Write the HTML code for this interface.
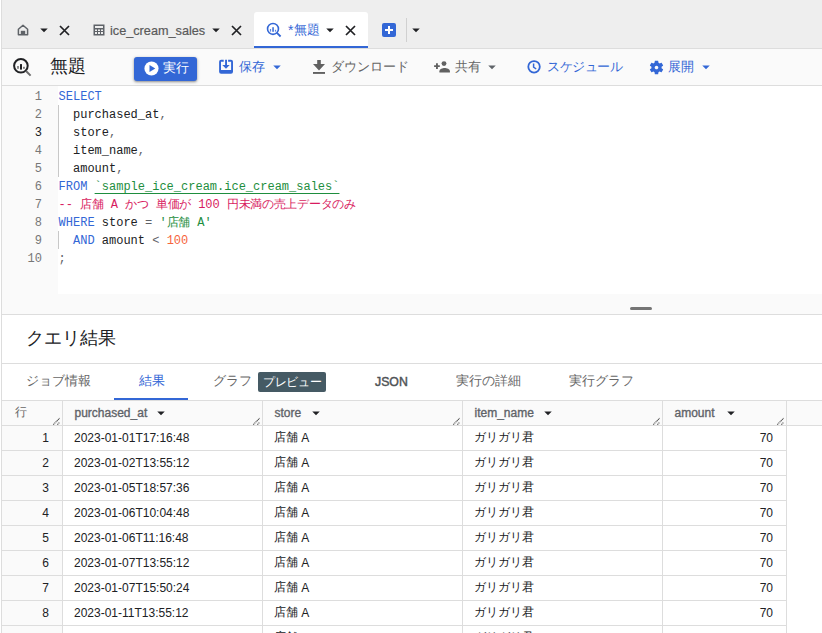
<!DOCTYPE html>
<html lang="ja"><head><meta charset="utf-8">
<style>
*{margin:0;padding:0;box-sizing:border-box}
html,body{width:822px;height:633px;overflow:hidden;background:#fff;font-family:"Liberation Sans",sans-serif;color:#202124}
.a{position:absolute}
svg{display:block}
#tabbar{left:0;top:0;width:822px;height:48px;background:#eeeeee}
#lb{left:1px;top:0;width:1px;height:633px;background:#dddddd;z-index:5}
#toolbar{left:0;top:48px;width:822px;height:38px;background:#fafafa;border-top:1px solid #dddddd;border-bottom:1px solid #dddddd}
.t13{font-size:13px;white-space:nowrap;line-height:16px}
.gray{color:#666}
.blue{color:#3367d6}
#gutter{left:2px;top:86px;width:56px;height:228px;background:#fafafa}
#code{left:58px;top:86px;width:764px;height:208px;background:#fff}
#codebot{left:58px;top:294px;width:764px;height:20px;background:#fafafa}
.ln{position:absolute;left:2px;width:40px;text-align:right;font-family:"Liberation Mono",monospace;font-size:12px;line-height:18px;color:#777}
.cl{position:absolute;left:58.6px;font-family:"Liberation Mono",monospace;font-size:12px;line-height:18px;white-space:pre;color:#202124}
.kw{color:#3367d6}
.str{color:#1e8e3e}
.cm{color:#d81b60}
.num{color:#f6643c}
.op{color:#5f6368}
.up{position:relative;top:-1px}
.cj{letter-spacing:-0.3px}
.guide{position:absolute;left:58px;width:1px;background:#c8c8c8}
.hr{position:absolute;left:2px;width:820px;height:1px;background:#dddddd}
.rowln{position:absolute;left:2px;width:784px;height:1px;background:#dddddd}
.vl{position:absolute;width:1px;background:#dddddd}
.cell{position:absolute;font-size:12px;line-height:16px;white-space:nowrap;color:#202124}
.hd{position:absolute;margin-left:0.5px;font-size:12px;font-weight:400;line-height:16px;white-space:nowrap;color:#5f6368;-webkit-text-stroke:0.35px #5f6368}
</style></head><body>
<div id="tabbar" class="a"></div>
<div id="lb" class="a"></div>
<div class="a" style="left:0;top:0;width:1px;height:633px;background:#fff;z-index:5"></div>

<!-- tab 1: home -->
<svg class="a" style="left:17px;top:24px" width="12" height="12" viewBox="0 0 12 12"><path d="M6 1.3L10.6 5.2V10.8H1.4V5.2Z" fill="none" stroke="#5f6368" stroke-width="1.5" stroke-linejoin="round"/><rect x="3.8" y="6.8" width="4.4" height="4.2" fill="#5f6368"/></svg>
<svg class="a" style="left:35px;top:21px" width="18" height="18" viewBox="0 0 24 24"><path fill="#202124" d="M7 10l5 5 5-5z"/></svg>
<svg class="a" style="left:58.54px;top:24.54px" width="11" height="11" viewBox="0 0 11 11"><path d="M1 1L10 10M10 1L1 10" stroke="#202124" stroke-width="1.7"/></svg>

<!-- tab 2: table -->
<svg class="a" style="left:93px;top:24px" width="12" height="12" viewBox="0 0 12 12"><path fill="#5f6368" d="M0.5 0.5h11v11h-11z M2 2v2h8V2z M2 5.5v1.5h2V5.5z M5 5.5v1.5h2V5.5z M8 5.5v1.5h2V5.5z M2 8v2h2V8z M5 8v2h2V8z M8 8v2h2V8z" fill-rule="evenodd"/></svg>
<div class="a t13 gray" style="left:110px;top:23px;font-size:12.7px;color:#5a5a5a;-webkit-text-stroke:0.2px #5a5a5a">ice_cream_sales</div>
<svg class="a" style="left:207px;top:21px" width="18" height="18" viewBox="0 0 24 24"><path fill="#202124" d="M7 10l5 5 5-5z"/></svg>
<svg class="a" style="left:230.54px;top:24.54px" width="11" height="11" viewBox="0 0 11 11"><path d="M1 1L10 10M10 1L1 10" stroke="#202124" stroke-width="1.7"/></svg>

<!-- active tab -->
<div class="a" style="left:254px;top:12px;width:114px;height:36px;background:#fff;border-radius:3px 3px 0 0;border-bottom:2px solid #3367d6"></div>
<svg class="a" style="left:265px;top:21px" width="17" height="17" viewBox="0 0 17 17"><circle cx="8" cy="7.9" r="5.45" fill="none" stroke="#3367d6" stroke-width="1.6"/><path d="M11.9 11.8L15.6 15.5" stroke="#3367d6" stroke-width="1.8"/><rect x="7.3" y="6.2" width="1.5" height="4.6" fill="#3367d6"/><rect x="4.9" y="8" width="1.2" height="2.6" fill="#3367d6" opacity=".8"/><rect x="9.9" y="8.8" width="1.2" height="1.8" fill="#3367d6" opacity=".8"/></svg>
<div class="a t13 blue" style="left:288px;top:22px"><span style="position:relative;top:0px;font-size:14px">*</span><span style="font-size:12.5px;position:relative;top:-1.5px;left:0.5px">無題</span></div>
<svg class="a" style="left:321px;top:21px" width="18" height="18" viewBox="0 0 24 24"><path fill="#202124" d="M7 10l5 5 5-5z"/></svg>
<svg class="a" style="left:344.54px;top:24.54px" width="11" height="11" viewBox="0 0 11 11"><path d="M1 1L10 10M10 1L1 10" stroke="#202124" stroke-width="1.7"/></svg>

<!-- plus -->
<div class="a" style="left:382px;top:23px;width:14px;height:14px;background:#3367d6;border-radius:2px"></div>
<div class="a" style="left:385px;top:29px;width:8px;height:2px;background:#fff"></div>
<div class="a" style="left:388px;top:26px;width:2px;height:8px;background:#fff"></div>
<div class="a" style="left:406px;top:18px;width:1px;height:24px;background:#d0d0d0"></div>
<svg class="a" style="left:407px;top:21px" width="18" height="18" viewBox="0 0 24 24"><path fill="#202124" d="M7 10l5 5 5-5z"/></svg>

<!-- toolbar -->
<div id="toolbar" class="a"></div>
<svg class="a" style="left:11px;top:56px" width="22" height="22" viewBox="0 0 22 22"><circle cx="9.9" cy="9.8" r="6.8" fill="none" stroke="#202124" stroke-width="2"/><path d="M15 15L19.6 19.6" stroke="#6b6b6b" stroke-width="2"/><rect x="9" y="8.1" width="2" height="5.5" fill="#202124"/><rect x="6.3" y="10" width="1.4" height="2.8" fill="#606060"/><rect x="12.2" y="10.8" width="1.5" height="2" fill="#606060"/></svg>
<div class="a" style="left:50px;top:55px;font-size:18px;line-height:22px;color:#202124">無題</div>

<div class="a" style="left:134px;top:57px;width:63px;height:23.5px;background:#3367d6;border-radius:3px;box-shadow:0 1px 2px rgba(0,0,0,.3),0 1px 3px 1px rgba(0,0,0,.12)"></div>
<svg class="a" style="left:143.5px;top:60.5px" width="15" height="15" viewBox="0 0 24 24"><circle cx="12" cy="12" r="11.3" fill="#fff"/><path d="M8.8 6.4V17.4L18 11.9z" fill="#3367d6"/></svg>
<div class="a t13" style="left:163px;top:60px;color:#fff">実行</div>

<svg class="a" style="left:218px;top:59px" width="16" height="16" viewBox="0 0 16 16"><path fill="#3367d6" d="M3.1 0.85H5.7V2.75H3V11H13.1V2.75H10.1V0.85H13A2 2 0 0 1 15 2.85V12.8A2 2 0 0 1 13 14.8H3.1A2 2 0 0 1 1.1 12.8V2.85A2 2 0 0 1 3.1 0.85Z"/><path fill="#3367d6" d="M7.1 0.85H9V6H11.7L8 9.7L4.3 6H7.1Z"/></svg>
<div class="a t13 blue" style="left:239px;top:59px">保存</div>
<svg class="a" style="left:268px;top:58px" width="18" height="18" viewBox="0 0 24 24"><path fill="#3367d6" d="M7 10l5 5 5-5z"/></svg>

<svg class="a" style="left:312px;top:60px" width="14" height="14" viewBox="0 0 14 14"><path fill="#616161" d="M5.2 0.1H8.8V4.1H13L7 10.5L1 4.1H5.2Z"/><rect x="1" y="12" width="12" height="1.9" fill="#616161"/></svg>
<div class="a t13 gray" style="left:331px;top:59px">ダウンロード</div>

<svg class="a" style="left:433px;top:60px" width="18" height="14" viewBox="0 0 18 14"><path fill="#616161" d="M1.1 5.2H3V3.3H4.9V5.2H6.8V7.1H4.9V9H3V7.1H1.1Z"/><circle cx="11" cy="3.6" r="2.45" fill="#616161"/><path fill="#616161" d="M6.4 12.5V11.3C6.4 9.2 9.6 8.1 11.65 8.1S16.9 9.2 16.9 11.3V12.5Z"/></svg>
<div class="a t13 gray" style="left:455px;top:59px">共有</div>
<svg class="a" style="left:483px;top:58px" width="18" height="18" viewBox="0 0 24 24"><path fill="#5f6368" d="M7 10l5 5 5-5z"/></svg>

<svg class="a" style="left:526px;top:59px" width="16" height="16" viewBox="0 0 16 16"><circle cx="8.05" cy="7.8" r="5.75" fill="none" stroke="#3367d6" stroke-width="1.8"/><path d="M7.6 4.6V8.2L10.2 10" fill="none" stroke="#3367d6" stroke-width="1.5"/></svg>
<div class="a t13 blue" style="left:547px;top:59px;letter-spacing:-0.5px">スケジュール</div>

<svg class="a" style="left:647.5px;top:58.5px" width="17" height="17" viewBox="0 0 24 24"><path fill="#3367d6" d="M19.14 12.94c.04-.3.06-.61.06-.94 0-.32-.02-.64-.07-.94l2.03-1.58c.18-.14.23-.41.12-.61l-1.92-3.320c-.12-.22-.37-.29-.59-.22l-2.39.96c-.5-.38-1.03-.7-1.62-.94l-.36-2.54c-.04-.24-.24-.41-.48-.41h-3.84c-.24 0-.43.17-.47.41l-.36 2.54c-.59.24-1.130.57-1.62.94l-2.39-.96c-.22-.08-.47 0-.59.22L2.74 8.87c-.12.21-.08.47.12.61l2.03 1.58c-.05.3-.09.63-.09.94s.02.64.07.94l-2.03 1.58c-.18.14-.23.41-.12.61l1.92 3.32c.12.22.37.29.59.22l2.39-.96c.5.38 1.03.7 1.62.94l.36 2.54c.05.24.24.41.48.41h3.84c.24 0 .44-.17.47-.41l.36-2.54c.59-.24 1.13-.56 1.62-.94l2.39.96c.22.08.47 0 .59-.22l1.92-3.32c.12-.22.07-.47-.12-.61l-2.01-1.58zM12 14.6c-1.43 0-2.6-1.17-2.6-2.6s1.17-2.6 2.6-2.6 2.6 1.17 2.6 2.6-1.17 2.6-2.6 2.6z"/></svg>
<div class="a t13 blue" style="left:668px;top:59px">展開</div>
<svg class="a" style="left:697px;top:58px" width="18" height="18" viewBox="0 0 24 24"><path fill="#3367d6" d="M7 10l5 5 5-5z"/></svg>

<!-- editor -->
<div id="gutter" class="a"></div>
<div id="code" class="a"></div>
<div id="codebot" class="a"></div>
<div class="guide" style="top:105px;height:72px"></div>
<div class="guide" style="top:231px;height:18px"></div>
<div class="ln" style="top:88px">1</div>
<div class="ln" style="top:106px">2</div>
<div class="ln" style="top:124px;color:#202124">3</div>
<div class="ln" style="top:142px">4</div>
<div class="ln" style="top:160px">5</div>
<div class="ln" style="top:178px">6</div>
<div class="ln" style="top:196px">7</div>
<div class="ln" style="top:214px">8</div>
<div class="ln" style="top:232px">9</div>
<div class="ln" style="top:250px">10</div>
<div class="cl" style="top:88px"><span class="kw">SELECT</span></div>
<div class="cl" style="top:106px">  purchased_at<span class="op">,</span></div>
<div class="cl" style="top:124px">  store<span class="op">,</span></div>
<div class="cl" style="top:142px">  item_name<span class="op">,</span></div>
<div class="cl" style="top:160px">  amount<span class="op">,</span></div>
<div class="cl" style="top:178px"><span class="kw">FROM</span> <span class="str" style="text-decoration:underline;text-underline-offset:3px">`sample_ice_cream.ice_cream_sales`</span></div>
<div class="cl cm" style="top:196px">-- <span class="cj">店舗</span> A <span class="cj">かつ</span> <span class="cj">単価が</span> 100 <span class="cj">円未満の売上データのみ</span></div>
<div class="cl" style="top:214px"><span class="kw">WHERE</span> store <span class="op">=</span> <span class="str">'<span class="cj">店舗</span> A'</span></div>
<div class="cl" style="top:232px">  <span class="kw">AND</span> amount <span class="op">&lt;</span> <span class="num">100</span></div>
<div class="cl" style="top:250px"><span class="op">;</span></div>

<div class="a" style="left:630px;top:307px;width:22px;height:3px;border-radius:2px;background:#757575"></div>
<div class="hr" style="top:314px"></div>

<!-- results -->
<div class="a" style="left:25.5px;top:327px;font-size:18px;line-height:22px;color:#202124">クエリ結果</div>
<div class="hr" style="top:363px"></div>
<div class="a t13 gray" style="left:26px;top:373px">ジョブ情報</div>
<div class="a t13 blue" style="left:139px;top:373px">結果</div>
<div class="a" style="left:114px;top:398px;width:74px;height:2px;background:#3367d6"></div>
<div class="a t13 gray" style="left:213px;top:373px">グラフ</div>
<div class="a" style="left:258px;top:372px;width:68px;height:20px;background:#455a64;border-radius:2px"></div>
<div class="a t13" style="left:263px;top:374px;color:#fff;font-size:12px;letter-spacing:-0.3px">プレビュー</div>
<div class="a t13" style="left:375px;top:374px;font-weight:400;color:#4f5356;font-size:12.3px;-webkit-text-stroke:0.45px #4f5356">JSON</div>
<div class="a t13 gray" style="left:456px;top:373px">実行の詳細</div>
<div class="a t13 gray" style="left:569px;top:373px">実行グラフ</div>

<!-- table -->
<div class="a" style="left:2px;top:400px;width:820px;height:25px;background:#fafafa"></div>
<div class="a" style="left:2px;top:425px;width:60px;height:208px;background:#fafafa"></div>
<div class="hr" style="top:400px"></div>
<div class="hr" style="top:425px"></div>
<div class="rowln" style="top:450px"></div>
<div class="rowln" style="top:475px"></div>
<div class="rowln" style="top:500px"></div>
<div class="rowln" style="top:525px"></div>
<div class="rowln" style="top:550px"></div>
<div class="rowln" style="top:575px"></div>
<div class="rowln" style="top:600px"></div>
<div class="rowln" style="top:625px"></div>
<div class="vl" style="left:62px;top:400px;height:233px"></div>
<div class="vl" style="left:262px;top:400px;height:233px"></div>
<div class="vl" style="left:462px;top:400px;height:233px"></div>
<div class="vl" style="left:662px;top:400px;height:233px"></div>
<div class="vl" style="left:786px;top:400px;height:233px"></div>

<div class="a t13 gray" style="left:14.5px;top:403.5px;font-size:12px">行</div>
<div class="hd" style="left:74px;top:405px">purchased_at</div>
<div class="hd" style="left:274px;top:405px">store</div>
<div class="hd" style="left:474px;top:405px">item_name</div>
<div class="hd" style="left:674px;top:405px">amount</div>
<svg class="a" style="left:152px;top:404px" width="18" height="18" viewBox="0 0 24 24"><path fill="#202124" d="M7 10l5 5 5-5z"/></svg>
<svg class="a" style="left:307px;top:404px" width="18" height="18" viewBox="0 0 24 24"><path fill="#202124" d="M7 10l5 5 5-5z"/></svg>
<svg class="a" style="left:539px;top:404px" width="18" height="18" viewBox="0 0 24 24"><path fill="#202124" d="M7 10l5 5 5-5z"/></svg>
<svg class="a" style="left:722px;top:404px" width="18" height="18" viewBox="0 0 24 24"><path fill="#202124" d="M7 10l5 5 5-5z"/></svg>
<svg class="a" style="left:52px;top:417px" width="9" height="9" viewBox="0 0 9 9"><path d="M1.3 7.6L7.6 1.2M5.4 7.6L7.6 5.3" stroke="#505050" stroke-width="1.2" stroke-dasharray="1.1 0.6"/></svg>
<svg class="a" style="left:252px;top:417px" width="9" height="9" viewBox="0 0 9 9"><path d="M1.3 7.6L7.6 1.2M5.4 7.6L7.6 5.3" stroke="#505050" stroke-width="1.2" stroke-dasharray="1.1 0.6"/></svg>
<svg class="a" style="left:452px;top:417px" width="9" height="9" viewBox="0 0 9 9"><path d="M1.3 7.6L7.6 1.2M5.4 7.6L7.6 5.3" stroke="#505050" stroke-width="1.2" stroke-dasharray="1.1 0.6"/></svg>
<svg class="a" style="left:652px;top:417px" width="9" height="9" viewBox="0 0 9 9"><path d="M1.3 7.6L7.6 1.2M5.4 7.6L7.6 5.3" stroke="#505050" stroke-width="1.2" stroke-dasharray="1.1 0.6"/></svg>
<svg class="a" style="left:776px;top:417px" width="9" height="9" viewBox="0 0 9 9"><path d="M1.3 7.6L7.6 1.2M5.4 7.6L7.6 5.3" stroke="#505050" stroke-width="1.2" stroke-dasharray="1.1 0.6"/></svg>

<div class="cell" style="left:2px;top:430px;width:47px;text-align:right">1</div>
<div class="cell" style="left:74px;top:430px">2023-01-01T17:16:48</div>
<div class="cell" style="left:274px;top:430px"><span class="up">店舗</span> A</div>
<div class="cell" style="left:474px;top:430px"><span class="up">ガリガリ君</span></div>
<div class="cell" style="left:662px;top:430px;width:111px;text-align:right">70</div>
<div class="cell" style="left:2px;top:455px;width:47px;text-align:right">2</div>
<div class="cell" style="left:74px;top:455px">2023-01-02T13:55:12</div>
<div class="cell" style="left:274px;top:455px"><span class="up">店舗</span> A</div>
<div class="cell" style="left:474px;top:455px"><span class="up">ガリガリ君</span></div>
<div class="cell" style="left:662px;top:455px;width:111px;text-align:right">70</div>
<div class="cell" style="left:2px;top:480px;width:47px;text-align:right">3</div>
<div class="cell" style="left:74px;top:480px">2023-01-05T18:57:36</div>
<div class="cell" style="left:274px;top:480px"><span class="up">店舗</span> A</div>
<div class="cell" style="left:474px;top:480px"><span class="up">ガリガリ君</span></div>
<div class="cell" style="left:662px;top:480px;width:111px;text-align:right">70</div>
<div class="cell" style="left:2px;top:505px;width:47px;text-align:right">4</div>
<div class="cell" style="left:74px;top:505px">2023-01-06T10:04:48</div>
<div class="cell" style="left:274px;top:505px"><span class="up">店舗</span> A</div>
<div class="cell" style="left:474px;top:505px"><span class="up">ガリガリ君</span></div>
<div class="cell" style="left:662px;top:505px;width:111px;text-align:right">70</div>
<div class="cell" style="left:2px;top:530px;width:47px;text-align:right">5</div>
<div class="cell" style="left:74px;top:530px">2023-01-06T11:16:48</div>
<div class="cell" style="left:274px;top:530px"><span class="up">店舗</span> A</div>
<div class="cell" style="left:474px;top:530px"><span class="up">ガリガリ君</span></div>
<div class="cell" style="left:662px;top:530px;width:111px;text-align:right">70</div>
<div class="cell" style="left:2px;top:555px;width:47px;text-align:right">6</div>
<div class="cell" style="left:74px;top:555px">2023-01-07T13:55:12</div>
<div class="cell" style="left:274px;top:555px"><span class="up">店舗</span> A</div>
<div class="cell" style="left:474px;top:555px"><span class="up">ガリガリ君</span></div>
<div class="cell" style="left:662px;top:555px;width:111px;text-align:right">70</div>
<div class="cell" style="left:2px;top:580px;width:47px;text-align:right">7</div>
<div class="cell" style="left:74px;top:580px">2023-01-07T15:50:24</div>
<div class="cell" style="left:274px;top:580px"><span class="up">店舗</span> A</div>
<div class="cell" style="left:474px;top:580px"><span class="up">ガリガリ君</span></div>
<div class="cell" style="left:662px;top:580px;width:111px;text-align:right">70</div>
<div class="cell" style="left:2px;top:605px;width:47px;text-align:right">8</div>
<div class="cell" style="left:74px;top:605px">2023-01-11T13:55:12</div>
<div class="cell" style="left:274px;top:605px"><span class="up">店舗</span> A</div>
<div class="cell" style="left:474px;top:605px"><span class="up">ガリガリ君</span></div>
<div class="cell" style="left:662px;top:605px;width:111px;text-align:right">70</div>
<div class="cell" style="left:274px;top:630px"><span class="up">店舗</span> A</div>
<div class="cell" style="left:474px;top:630px"><span class="up">ガリガリ君</span></div>
</body></html>
